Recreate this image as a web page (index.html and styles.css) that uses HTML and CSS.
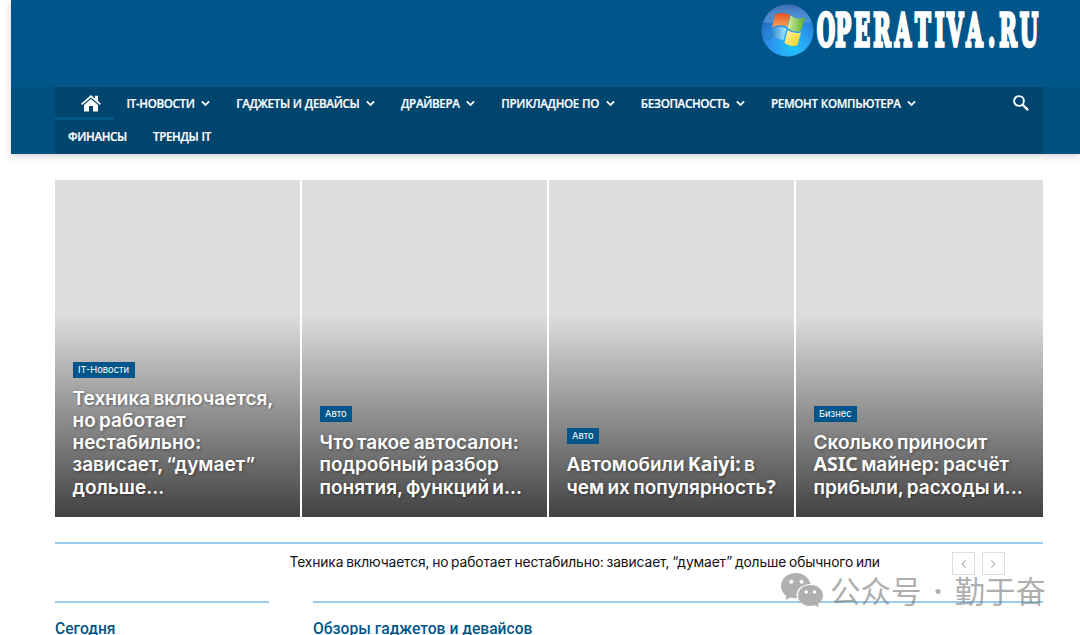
FILE: index.html
```html
<!DOCTYPE html>
<html lang="ru">
<head>
  <meta charset="UTF-8" />
  <meta name="viewport" content="width=device-width, initial-scale=1.0" />
  <title>Operativa.ru</title>
  <link rel="stylesheet" href="styles.css">
</head>
<body>
  <svg class="sprite">
    <symbol id="chevron" viewBox="0 0 8 6"><path d="M.8 1.1 4 4.4 7.2 1.1" fill="none" stroke="#fff" stroke-width="1.6"/></symbol>
  </svg>

  <header class="header">
    <div class="container top">
      <a href="#" class="logo">
        <svg width="280" height="60" viewBox="0 0 280 60">
          <defs>
            <radialGradient id="orb" cx=".6" cy=".85" r=".85">
              <stop offset="0" stop-color="#20c4ff"/>
              <stop offset=".5" stop-color="#2a94ee"/>
              <stop offset="1" stop-color="#2461ac"/>
            </radialGradient>
            <linearGradient id="shine" x1="0" y1="0" x2="0" y2="1">
              <stop offset="0" stop-color="#3a6ab4"/>
              <stop offset="1" stop-color="#7fbcee" stop-opacity=".35"/>
            </linearGradient>
            <linearGradient id="red" x1="0" y1="0" x2="0" y2="1"><stop offset="0" stop-color="#e8501c"/><stop offset="1" stop-color="#f9a765"/></linearGradient>
            <linearGradient id="green" x1="0" y1="0" x2="1" y2="0"><stop offset="0" stop-color="#d5efa0"/><stop offset="1" stop-color="#58ac28"/></linearGradient>
            <linearGradient id="blue" x1="0" y1="0" x2="1" y2="0"><stop offset="0" stop-color="#1673c4"/><stop offset="1" stop-color="#a5ecff"/></linearGradient>
            <linearGradient id="yellow" x1="0" y1="0" x2="1" y2="1"><stop offset="0" stop-color="#fffbb0"/><stop offset="1" stop-color="#f0cb12"/></linearGradient>
          </defs>
          <circle cx="26.500" cy="30.500" r="26" fill="url(#orb)"/>
          <path d="M2.500 22C6.500 11 15.500 4.500 26.500 4.500S46.500 11 50.500 22C42 26 34 16 25 18S10 25 2.500 22Z" fill="url(#shine)"/>
          <path d="M14 14.500Q21 11.500 29 14.500L26.500 27Q19 23.500 11 27.500Z" fill="url(#red)"/>
          <path d="M29.500 15.500Q36 20.500 44 17.500L40 31Q33 33 26.500 28Z" fill="url(#green)"/>
          <path d="M11 28.500Q19 25 25.500 28.500L22.500 40.500Q15 37 7.500 40Z" fill="url(#blue)"/>
          <path d="M26.500 30Q33 34.500 40 32.500L36.500 45Q29 47.500 23.500 43Z" fill="url(#yellow)"/>
          <text class="logo-text" transform="translate(56.300 46) scale(.47 1)" x="-1 38 78 119 165 208 250 276 317 363 387 431">OPERATIVA.RU</text>
        </svg>
      </a>
    </div>
    <div class="nav-row">
      <nav class="container nav">
        <ul class="menu">
          <li class="home"><a href="#">
            <svg width="20" height="17" viewBox="0 0 20 17" fill="#fff"><path d="M10 0 0 8.800l1.100 1.300L10 2.400l8.900 7.700L20 8.800l-3-2.700V.8h-3v2.700z"/><path d="M10 4 3 10v6.500h5V11h4v5.500h5V10z"/></svg>
          </a></li>
          <li><a href="#">IT-НОВОСТИ</a><svg class="chev"><use href="#chevron"/></svg></li>
          <li><a href="#">ГАДЖЕТЫ И ДЕВАЙСЫ</a><svg class="chev"><use href="#chevron"/></svg></li>
          <li><a href="#">ДРАЙВЕРА</a><svg class="chev"><use href="#chevron"/></svg></li>
          <li><a href="#">ПРИКЛАДНОЕ ПО</a><svg class="chev"><use href="#chevron"/></svg></li>
          <li><a href="#">БЕЗОПАСНОСТЬ</a><svg class="chev"><use href="#chevron"/></svg></li>
          <li><a href="#">РЕМОНТ КОМПЬЮТЕРА</a><svg class="chev"><use href="#chevron"/></svg></li>
          <li><a href="#">ФИНАНСЫ</a></li>
          <li><a href="#">ТРЕНДЫ IT</a></li>
        </ul>
        <svg class="search" width="16" height="16" viewBox="0 0 16 16" fill="none" stroke="#fff"><circle cx="6" cy="6" r="4.900" stroke-width="1.900"/><path d="m9.700 9.700 5.400 5.400" stroke-width="2.300"/></svg>
      </nav>
    </div>
  </header>

  <main class="container">
    <section class="grid">
      <article class="card">
        <a class="tag" href="#">IT-Новости</a>
        <h3>Техника включается,<br>но работает<br>нестабильно:<br>зависает, “думает”<br>дольше...</h3>
      </article>
      <article class="card">
        <a class="tag" href="#">Авто</a>
        <h3>Что такое автосалон:<br>подробный разбор<br>понятия, функций и...</h3>
      </article>
      <article class="card">
        <a class="tag" href="#">Авто</a>
        <h3>Автомобили <span class="latin">Kaiyi:</span> в<br>чем их популярность<span class="latin">?</span></h3>
      </article>
      <article class="card">
        <a class="tag" href="#">Бизнес</a>
        <h3>Сколько приносит<br><span class="latin">ASIC</span> майнер: расчёт<br>прибыли, расходы и...</h3>
      </article>
    </section>

    <section class="trending">
      <a href="#">Техника включается, но работает нестабильно: зависает, “думает” дольше обычного или</a>
      <div class="arrows">
        <button><svg width="6" height="10" viewBox="0 0 5 8"><path d="M4 1 1 4l3 3"/></svg></button>
        <button><svg width="6" height="10" viewBox="0 0 5 8"><path d="m1 1 3 3-3 3"/></svg></button>
      </div>
    </section>

    <div class="columns">
      <h4>Сегодня</h4>
      <h4>Обзоры гаджетов и девайсов</h4>
    </div>
  </main>

  <div class="watermark">
    <svg width="42" height="35" viewBox="0 0 42 35">
      <path fill="#b0b0b0" d="M15 0C6.500 0 0 5.700 0 13c0 4 2 7.500 5.500 10L4.500 27l5-2.500c2 .6 3.900.9 6.400.8C14 17.500 20 11 29.500 11 28 4.500 22 0 15 0Z"/>
      <path fill="#b0b0b0" d="M29.500 12C22 12 17 17 17 22.500S22 33 29.500 33c1.500 0 3-.2 4.500-.7l4 2.200-1-3.600c3-2 5-5 5-8.400C42 17 37 12 29.500 12Z"/>
      <g fill="#fff"><circle cx="10.300" cy="8.800" r="2"/><circle cx="20.500" cy="8.800" r="2"/><circle cx="25.200" cy="19" r="1.700"/><circle cx="33.500" cy="19" r="1.700"/></g>
    </svg>
    <span>公众号</span><span class="dot">·</span><span>勤于奋</span>
  </div>
</body>
</html>
```
FILE: styles.css
```css
* {
  box-sizing: border-box;
}

body {
  margin: 0;
  padding-left: 10.500px;
  height: 635px;
  overflow: hidden;
  background: #fff;
  font-family: Inter, "Open Sans", sans-serif;
}

a {
  color: inherit;
  text-decoration: none;
}

.sprite {
  display: none;
}

.container {
  width: 988px;
  margin-left: 44.500px;
}

.header {
  height: 153.500px;
  background: #00568a;
  box-shadow: 0 2px 8px rgba(0, 0, 0, 0.18);
}

.top {
  display: flex;
  justify-content: flex-end;
  height: 87px;
}

.logo {
  margin-right: 2px;
}

.logo-text {
  font-family: "DejaVu Serif", serif;
  font-weight: bold;
  font-size: 45px;
  fill: #fff;
  stroke: #fff;
  stroke-width: 3.500px;
}

.nav-row {
  background: #00507f;
}

.nav {
  display: flex;
  justify-content: space-between;
  height: 66.500px;
  background: #00456d;
}

.menu {
  display: flex;
  flex-wrap: wrap;
  width: 890px;
  margin: 0;
  padding: 0;
  list-style: none;
  font: 600 11.600px/33px "Open Sans", sans-serif;
  letter-spacing: -0.35px;
  word-spacing: 0.500px;
  color: #fff;
  -webkit-text-stroke: 0.2px #fff;
}

.menu li {
  display: flex;
  align-items: center;
  height: 33px;
  padding: 0 13px;
}

.menu .home {
  width: 58.500px;
  padding: 0 0 0 26px;
  border-bottom: 3px solid #00568a;
}

.home a {
  display: flex;
  padding-top: 3px;
}

.chev {
  width: 9px;
  height: 7px;
  margin-left: 6.800px;
}

.search {
  margin: 8px 14px 0 0;
}

.grid {
  display: grid;
  grid-template-columns: repeat(3, 245px) 1fr;
  gap: 2px;
  margin-top: 26.500px;
}

.card {
  display: flex;
  flex-direction: column;
  justify-content: flex-end;
  align-items: flex-start;
  height: 337px;
  padding: 0 0 18px 17.500px;
  background: linear-gradient(to bottom, transparent 40%, rgba(0, 0, 0, 0.7) 100%) #ddd;
  color: #fff;
}

.tag {
  height: 16px;
  padding: 0 5.500px;
  margin-bottom: 10px;
  background: #00568a;
  font-size: 9.400px;
  line-height: 16px;
}

.card h3 {
  margin: 0;
  font-size: 19px;
  font-weight: 600;
  line-height: 22.300px;
  word-spacing: -1.500px;
  white-space: nowrap;
  text-shadow: 1px 1px 3px rgba(0, 0, 0, 0.4);
}

.latin {
  font-family: "Noto Sans", sans-serif;
  font-weight: 700;
  font-size: 19.500px;
  line-height: 1;
}

.trending {
  display: flex;
  justify-content: space-between;
  height: 59px;
  margin-top: 25px;
  padding: 8px 38.500px 0 234.500px;
  border-top: 2px solid #9accf0;
  color: #111;
  font-size: 13.800px;
  line-height: 20px;
  letter-spacing: -0.11px;
  word-spacing: -1px;
}

.arrows {
  display: flex;
  gap: 6.500px;
}

.arrows button {
  display: flex;
  align-items: center;
  justify-content: center;
  width: 23px;
  height: 23px;
  padding: 0;
  border: 1px solid #ddd;
  background: none;
}

.arrows path {
  fill: none;
  stroke: #b7b7b7;
}

.columns {
  display: grid;
  grid-template-columns: 214px 1fr;
  gap: 44px;
}

.columns h4 {
  margin: 0;
  padding-top: 15px;
  border-top: 2px solid #9accf0;
  color: #00568a;
  font: 500 15.650px/22px Roboto, sans-serif;
}

/* stamp lying over the lower right corner */
.watermark {
  position: absolute;
  left: 781px;
  top: 573px;
  display: flex;
  color: rgba(120, 120, 120, 0.6);
  font: 400 30.500px/34px "Noto Sans CJK SC", sans-serif;
}

.watermark svg {
  margin-right: 7px;
}

.watermark .dot {
  width: 33px;
  font-size: 24px;
  text-align: center;
}
```
